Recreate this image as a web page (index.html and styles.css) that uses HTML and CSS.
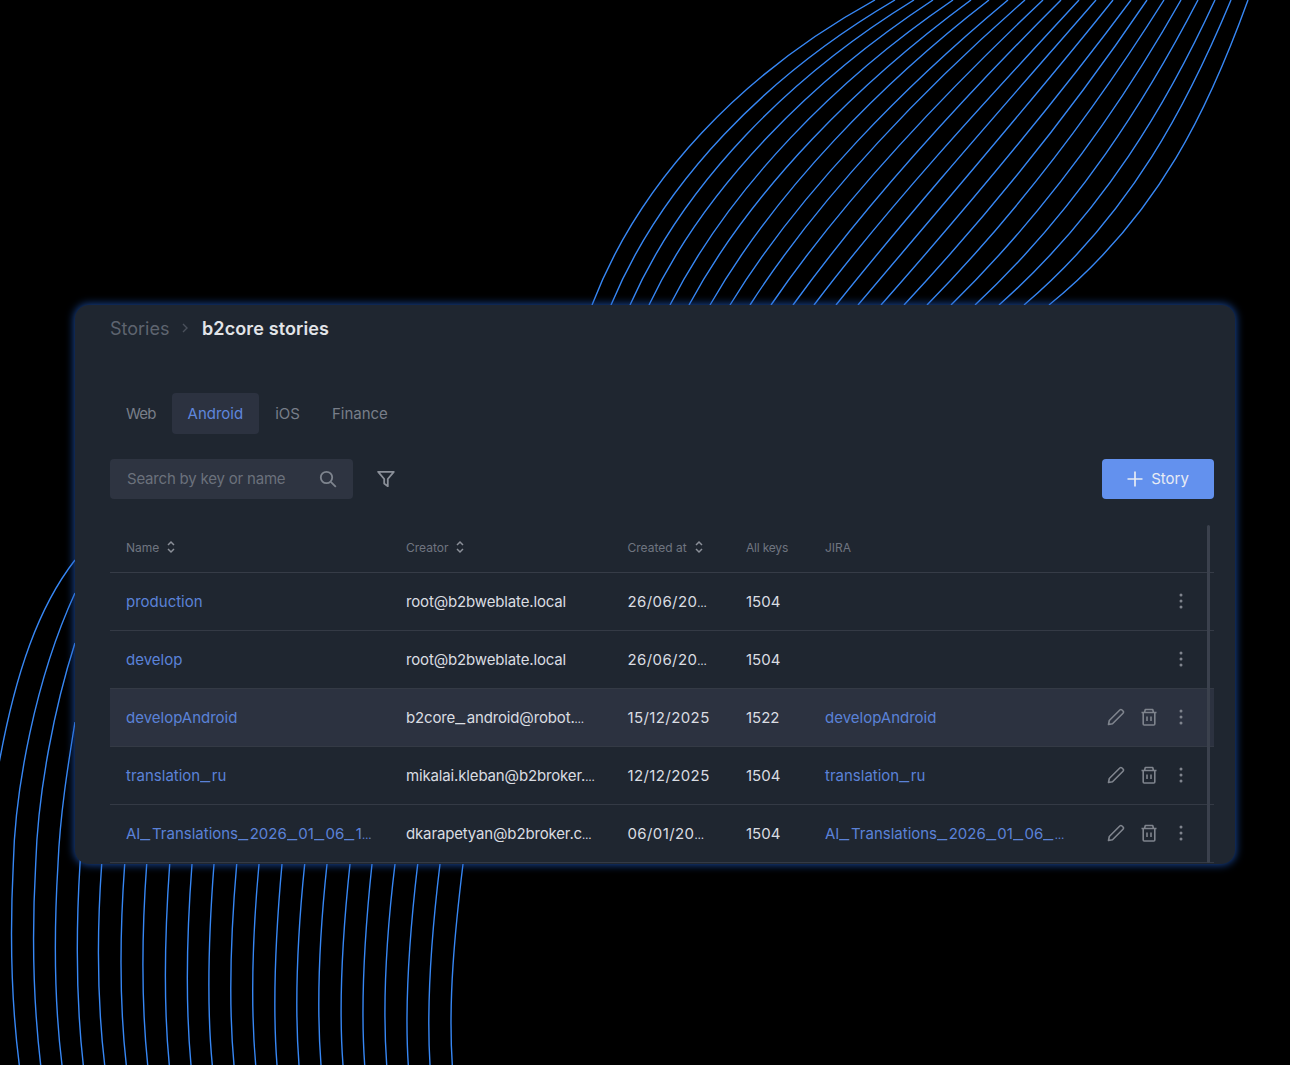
FILE: index.html
```html
<!DOCTYPE html>
<html lang="en">
<head>
<meta charset="utf-8">
<title>b2core stories</title>
<link rel="stylesheet" href="styles.css">
</head>
<body>
<svg class="waves" viewBox="0 0 1290 1065" width="1290" height="1065" aria-hidden="true">
  <g class="wave-lines">
    <path d="M592 305C640 180 742 73 875 0"/>
    <path d="M611 305C662 182 767 75 895 0"/>
    <path d="M630 305C684 183 790 76 914 0"/>
    <path d="M649 305C706 185 814 78 933 0"/>
    <path d="M670 305C730 187 837 79 953 0"/>
    <path d="M689 305C752 188 861 81 971 0"/>
    <path d="M710 305C776 190 883 82 989 0"/>
    <path d="M730 305C799 192 907 84 1008 0"/>
    <path d="M750 305C822 193 928 85 1025 0"/>
    <path d="M771 305C846 195 951 87 1043 0"/>
    <path d="M793 305C871 197 973 88 1061 0"/>
    <path d="M814 305C895 198 996 90 1079 0"/>
    <path d="M836 305C920 200 1017 91 1096 0"/>
    <path d="M858 305C945 202 1039 93 1113 0"/>
    <path d="M881 305C971 203 1061 94 1131 0"/>
    <path d="M904 305C997 205 1082 96 1147 0"/>
    <path d="M927 305C1023 207 1103 97 1164 0"/>
    <path d="M951 305C1050 208 1125 99 1181 0"/>
    <path d="M975 305C1077 210 1146 100 1198 0"/>
    <path d="M999 305C1104 212 1168 102 1215 0"/>
    <path d="M1024 305C1132 213 1188 103 1231 0"/>
    <path d="M1049 305C1160 215 1210 105 1248 0"/>

    <path d="M75 560C40 605 15 670 -3 775"/>
    <path d="M19.3 1065C11 1000 10 930 13.3 864C15 790 35 680 75 593"/>
    <path d="M40.7 1065C33 1000 32 930 35.7 864C38 790 55 705 75 643"/>
    <path d="M62 1065C54 1000 54 930 58 864C60 815 68 765 75 722"/>
    <path d="M83.3 1065C76 1000 76 930 80 864L82 840"/>
    <path d="M104.7 1065C97 1000 97 930 101.7 864L104 840"/>
    <path d="M126.3 1065C119 1000 120 930 124.7 864L127 840"/>
    <path d="M147.7 1065C141 1000 142 930 146.7 864L149 840"/>
    <path d="M169.3 1065C163 1000 165 930 169.7 864L172 840"/>
    <path d="M191 1065C185 1000 187 930 192 864L195 840"/>
    <path d="M212.3 1065C206 1000 209 930 214 864L217 840"/>
    <path d="M234 1065C228 1000 231 930 236.7 864L239 840"/>
    <path d="M255.7 1065C250 1000 253 930 259 864L262 840"/>
    <path d="M277 1065C272 1000 276 930 282 864L285 840"/>
    <path d="M299 1065C294 1000 298 930 304.7 864L307 840"/>
    <path d="M321 1065C316 1000 320 930 327 864L330 840"/>
    <path d="M343 1065C338 1000 343 930 350 864L353 840"/>
    <path d="M364.7 1065C360 1000 365 930 372 864L375 840"/>
    <path d="M386.7 1065C382 1000 387 930 395 864L398 840"/>
    <path d="M408.3 1065C404 1000 410 930 417.7 864L421 840"/>
    <path d="M430 1065C426 1000 432 930 440 864L443 840"/>
    <path d="M452.3 1065C448 1000 455 930 463 864L466 840"/>
  </g>
</svg>

<main class="card">
  <nav class="crumbs">
    <span class="crumb-parent">Stories</span>
    <svg class="crumb-sep" width="8" height="12" viewBox="0 0 8 12" aria-hidden="true"><path d="M2 2l4 4-4 4"/></svg>
    <span class="crumb-current">b2core stories</span>
  </nav>

  <div class="tabs">
    <span class="tab tab-web">Web</span>
    <span class="tab tab-active">Android</span>
    <span class="tab">iOS</span>
    <span class="tab">Finance</span>
  </div>

  <div class="toolbar">
    <div class="search">
      <span class="search-text">Search by key or name</span>
      <svg class="search-icon" width="18" height="18" viewBox="0 0 18 18" aria-hidden="true"><circle cx="7.5" cy="7.5" r="5.7"/><path d="M11.8 11.8l5 5"/></svg>
    </div>
    <svg class="filter-icon" width="18" height="18" viewBox="0 0 18 18" aria-hidden="true"><path d="M1.2 1.8h15.6l-6 7.2v7.2l-3.6-2.6V9z"/></svg>
    <button class="add-btn" type="button">
      <svg width="18" height="18" viewBox="0 0 18 18" aria-hidden="true"><path d="M9 1.5v15M1.5 9h15"/></svg>
      <span>Story</span>
    </button>
  </div>

  <div class="table-wrap">
    <table class="stories">
      <colgroup>
        <col class="col-name"><col class="col-creator"><col class="col-date"><col class="col-keys"><col class="col-jira"><col class="col-actions">
      </colgroup>
      <thead>
        <tr>
          <th><span class="th-in">Name <svg class="sort" width="8" height="14" viewBox="0 0 8 14" aria-hidden="true"><path d="M1 5l3-3 3 3M1 9l3 3 3-3"/></svg></span></th>
          <th><span class="th-in">Creator <svg class="sort" width="8" height="14" viewBox="0 0 8 14" aria-hidden="true"><path d="M1 5l3-3 3 3M1 9l3 3 3-3"/></svg></span></th>
          <th><span class="th-in">Created at <svg class="sort" width="8" height="14" viewBox="0 0 8 14" aria-hidden="true"><path d="M1 5l3-3 3 3M1 9l3 3 3-3"/></svg></span></th>
          <th class="th-keys">All keys</th>
          <th>JIRA</th>
          <th></th>
        </tr>
      </thead>
      <tbody>
        <tr>
          <td class="link">production</td><td class="creator">root@b2bweblate.local</td><td class="date">26/06/20<span class="el">…</span></td><td>1504</td><td></td>
          <td><div class="actions"><svg class="dots" width="4" height="16" viewBox="0 0 4 16" aria-hidden="true"><circle cx="2" cy="2" r="1.5"/><circle cx="2" cy="8" r="1.5"/><circle cx="2" cy="14" r="1.5"/></svg></div></td>
        </tr>
        <tr>
          <td class="link">develop</td><td class="creator">root@b2bweblate.local</td><td class="date">26/06/20<span class="el">…</span></td><td>1504</td><td></td>
          <td><div class="actions"><svg class="dots" width="4" height="16" viewBox="0 0 4 16" aria-hidden="true"><circle cx="2" cy="2" r="1.5"/><circle cx="2" cy="8" r="1.5"/><circle cx="2" cy="14" r="1.5"/></svg></div></td>
        </tr>
        <tr class="row-hover">
          <td class="link">developAndroid</td><td class="creator">b2core<span class="us">_</span>android@robot.<span class="el">…</span></td><td class="date">15/12/2025</td><td>1522</td><td class="link">developAndroid</td>
          <td><div class="actions">
            <svg class="pencil" width="18" height="18" viewBox="0 0 18 18" aria-hidden="true"><path d="M1.5 16.5l.8-4L12.8 2a1.6 1.6 0 0 1 2.2 0l1 1a1.6 1.6 0 0 1 0 2.2L5.5 15.7z"/></svg>
            <svg class="trash" width="16" height="18" viewBox="0 0 16 18" aria-hidden="true"><path d="M.5 4.5h15M2.2 4.5V16a1 1 0 0 0 1 1h9.6a1 1 0 0 0 1-1V4.5M3.5 4.5l.8-3h7.4l.8 3M6 8.5V13M10 8.5V13"/></svg>
            <svg class="dots" width="4" height="16" viewBox="0 0 4 16" aria-hidden="true"><circle cx="2" cy="2" r="1.5"/><circle cx="2" cy="8" r="1.5"/><circle cx="2" cy="14" r="1.5"/></svg>
          </div></td>
        </tr>
        <tr>
          <td class="link">translation<span class="us">_</span>ru</td><td class="creator">mikalai.kleban@b2broker.<span class="el">…</span></td><td class="date">12/12/2025</td><td>1504</td><td class="link">translation<span class="us">_</span>ru</td>
          <td><div class="actions">
            <svg class="pencil" width="18" height="18" viewBox="0 0 18 18" aria-hidden="true"><path d="M1.5 16.5l.8-4L12.8 2a1.6 1.6 0 0 1 2.2 0l1 1a1.6 1.6 0 0 1 0 2.2L5.5 15.7z"/></svg>
            <svg class="trash" width="16" height="18" viewBox="0 0 16 18" aria-hidden="true"><path d="M.5 4.5h15M2.2 4.5V16a1 1 0 0 0 1 1h9.6a1 1 0 0 0 1-1V4.5M3.5 4.5l.8-3h7.4l.8 3M6 8.5V13M10 8.5V13"/></svg>
            <svg class="dots" width="4" height="16" viewBox="0 0 4 16" aria-hidden="true"><circle cx="2" cy="2" r="1.5"/><circle cx="2" cy="8" r="1.5"/><circle cx="2" cy="14" r="1.5"/></svg>
          </div></td>
        </tr>
        <tr>
          <td class="link">AI<span class="us">_</span>Translations<span class="us">_</span>2026<span class="us">_</span>01<span class="us">_</span>06<span class="us">_</span>1<span class="el">…</span></td><td class="creator">dkarapetyan@b2broker.c<span class="el">…</span></td><td class="date">06/01/20<span class="el">…</span></td><td>1504</td><td class="link">AI<span class="us">_</span>Translations<span class="us">_</span>2026<span class="us">_</span>01<span class="us">_</span>06<span class="us">_</span><span class="el">…</span></td>
          <td><div class="actions">
            <svg class="pencil" width="18" height="18" viewBox="0 0 18 18" aria-hidden="true"><path d="M1.5 16.5l.8-4L12.8 2a1.6 1.6 0 0 1 2.2 0l1 1a1.6 1.6 0 0 1 0 2.2L5.5 15.7z"/></svg>
            <svg class="trash" width="16" height="18" viewBox="0 0 16 18" aria-hidden="true"><path d="M.5 4.5h15M2.2 4.5V16a1 1 0 0 0 1 1h9.6a1 1 0 0 0 1-1V4.5M3.5 4.5l.8-3h7.4l.8 3M6 8.5V13M10 8.5V13"/></svg>
            <svg class="dots" width="4" height="16" viewBox="0 0 4 16" aria-hidden="true"><circle cx="2" cy="2" r="1.5"/><circle cx="2" cy="8" r="1.5"/><circle cx="2" cy="14" r="1.5"/></svg>
          </div></td>
        </tr>
      </tbody>
    </table>
    <div class="scrollbar"></div>
  </div>
</main>
</body>
</html>
```

FILE: styles.css
```css
* { box-sizing: border-box; }

html, body { margin: 0; height: 100%; }

body {
  position: relative;
  height: 1065px;
  overflow: hidden;
  padding: 305px 55px 0 75px;
  background: #000;
  font-family: Inter, "Noto Sans", sans-serif;
  font-size: 15px;
  color: #dadde2;
}

.waves { position: absolute; left: 0; top: 0; display: block; }
.wave-lines path { fill: none; stroke: #3787f4; stroke-width: 1.4; }

.card {
  position: relative;
  width: 1160px;
  height: 559px;
  padding: 0 21px 0 35px;
  overflow: hidden;
  background: #1f2630;
  border-radius: 14px;
  box-shadow: 0 0 8px 1px rgba(32, 90, 190, .8);
}

.crumbs { display: flex; align-items: center; gap: 12px; height: 46px; font-size: 18px; }
.crumb-parent { color: #5e646f; }
.crumb-current { margin-left: .5px; color: #e2e4e8; font-weight: 600; letter-spacing: .12px; }
.crumb-sep path { fill: none; stroke: #4a505b; stroke-width: 1.4; }

.tabs { display: flex; height: 41px; margin-top: 42px; }
.tab {
  display: flex;
  align-items: center;
  padding: 0 16px;
  border-radius: 4px;
  color: #787e89;
}
.tab-web { letter-spacing: -.8px; }
.tab-active { background: #2c3240; color: #5f86dc; }

.toolbar { display: flex; align-items: center; height: 40px; margin-top: 25px; }
.search {
  display: flex;
  align-items: center;
  justify-content: space-between;
  width: 243px;
  height: 40px;
  padding: 0 16px 0 17px;
  background: #2e3441;
  border-radius: 4px;
  color: #6b717c;
}
.search-text { margin-top: -1px; letter-spacing: -.2px; }
.search-icon circle, .search-icon path { fill: none; stroke: #7e848e; stroke-width: 1.8; }
.filter-icon { margin-left: 24px; }
.filter-icon path { fill: none; stroke: #8a8f98; stroke-width: 1.8; stroke-linejoin: round; }

.add-btn {
  display: flex;
  align-items: center;
  justify-content: center;
  gap: 7px;
  width: 112px;
  height: 40px;
  margin-left: auto;
  padding: 0 1px 1px 0;
  border: 0;
  border-radius: 4px;
  background: #6391ee;
  color: #e8ecf4;
  font: inherit;
}
.add-btn path { fill: none; stroke: #e8ecf4; stroke-width: 1.7; }

.table-wrap { position: relative; margin-top: 26px; }
.stories { width: 1104px; table-layout: fixed; border-collapse: collapse; }

.col-name { width: 280px; }
.col-creator { width: 221.5px; }
.col-date { width: 118.5px; }
.col-keys { width: 79px; }
.col-jira { width: 260px; }
.col-actions { width: 145px; }

.stories th {
  height: 47px;
  padding: 0 0 2px 16px;
  border-bottom: 1px solid #363c47;
  color: #6f7580;
  font-size: 12px;
  font-weight: 400;
  text-align: left;
  white-space: nowrap;
}
.stories th.th-keys { letter-spacing: -.2px; }
.th-in { display: inline-flex; align-items: center; gap: 8px; }
.sort path { fill: none; stroke: #8a8f98; stroke-width: 1.5; }

.stories td {
  height: 58px;
  padding: 0 0 0 16px;
  border-bottom: 1px solid #343a45;
  white-space: nowrap;
}
.stories td.link { color: #5b82d8; }
.stories td.creator { letter-spacing: -.15px; }
.stories td.date { letter-spacing: .4px; }
.row-hover td { background: #2c3240; }

.us {
  display: inline-block;
  width: 11.6px;
  transform: scaleX(1.5);
  transform-origin: left center;
}
.el { font-size: 11px; letter-spacing: 0; }

.actions { display: flex; align-items: center; justify-content: flex-end; padding-right: 31px; }
.pencil { margin-right: 16px; }
.trash { margin-right: 22px; }
.pencil path, .trash path { fill: none; stroke: #7f848d; stroke-width: 1.6; stroke-linejoin: round; }
.dots circle { fill: #7f848d; }

.scrollbar {
  position: absolute;
  top: 0;
  right: 4px;
  bottom: 0;
  width: 3.5px;
  background: #3b414d;
  border-radius: 2px;
}
```
